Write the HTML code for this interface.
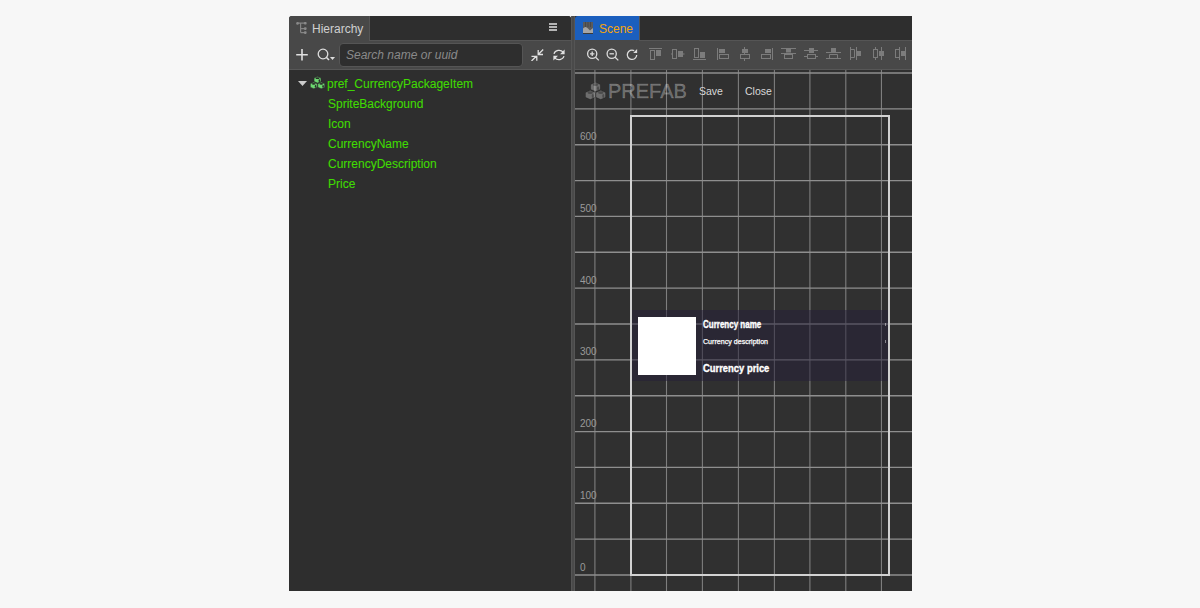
<!DOCTYPE html>
<html><head><meta charset="utf-8">
<style>
*{margin:0;padding:0;box-sizing:border-box}
html,body{width:1200px;height:608px;overflow:hidden;background:#f7f7f7;font-family:"Liberation Sans",sans-serif}
.abs{position:absolute}
#hier{left:289px;top:16px;width:282px;height:575px;background:#2e2e2e;border-radius:3px 3px 0 0;overflow:hidden}
#hier .tabbar{left:80px;top:0;width:202px;height:25px;background:#2e2e2e;border-left:1px solid #555;border-bottom:1px solid #555}
#hier .tab{left:0;top:0;width:80px;height:25px;background:#484848}
#hier .tab span{position:absolute;left:23px;top:6px;font-size:12px;color:#d0d0d0}
#hier .tool{left:0;top:25px;width:282px;height:29px;background:#484848;border-bottom:1px solid #575757}
.search{left:50px;top:2px;width:184px;height:24px;background:#2e2e2e;border:1px solid #555;border-radius:4px}
.search span{position:absolute;left:6px;top:4px;font-size:12px;font-style:italic;color:#8a8a8a}
.tree div{position:absolute;font-size:12px;color:#40da02;white-space:nowrap;-webkit-text-stroke:0.1px #40da02}
#split{left:571px;top:16px;width:4px;height:575px;background:#555}
#split i{position:absolute;left:1px;top:0;width:2px;height:575px;background:#4a4a4a}
#scene{left:575px;top:16px;width:337px;height:575px;background:#303030;overflow:hidden}
#scene .tabbar{z-index:2;left:64px;top:0;width:273px;height:25px;background:#2e2e2e;border-left:1px solid #555;border-bottom:1px solid #555}
#scene .tab{left:0;top:0;width:64px;height:24px;background:#1b5fbe;border-radius:3px 0 0 0}
#scene .tab span{position:absolute;left:24px;top:6px;font-size:12px;color:#f5a50a}
#scene .tool{left:0;top:24px;width:337px;height:30px;background:#484848;border-bottom:1px solid #575757}
#scene .canvas{left:0;top:54px;width:337px;height:521px;background:#303030}
#scene .labels div{position:absolute;left:5px;font-size:10px;color:#9a9a9a;line-height:12px}
#scene .card{left:56px;top:294px;width:258px;height:71px;background:rgba(36,30,56,0.5)}
#scene .white{left:63px;top:301px;width:58px;height:58px;background:#fff}
#scene .rect{left:55px;top:99px;width:260px;height:461px;border:2px solid #d2d2d2}
#scene .ctext{color:#fff;white-space:nowrap;line-height:1}
#scene .prefab{left:33px;top:64px;font-size:20px;color:rgba(255,255,255,0.29);line-height:23px;-webkit-text-stroke:0.35px rgba(255,255,255,0.29)}
#scene .btn{top:69px;font-size:10.5px;color:#d8d8d8;line-height:12px}
</style></head><body>
<div id="hier" class="abs">
  <div class="tabbar abs"></div>
  <div class="tab abs">
    <svg class="abs" style="left:7px;top:6px" width="11" height="12" viewBox="0 0 11 12"><g stroke="#858585" stroke-width="1.2" fill="none"><path d="M1 1.2H9M4.6 1.2V10.6M4.6 6.6H9M4.6 10.6H9"/></g><g fill="#8a8a8a"><circle cx="1.5" cy="1.4" r="1.3"/><rect x="8" y="0" width="2.6" height="2.6" rx="0.8"/><rect x="8" y="5.3" width="2.6" height="2.6" rx="0.8"/><rect x="8" y="9.3" width="2.6" height="2.6" rx="0.8"/></g></svg>
    <span>Hierarchy</span>
  </div>
  <svg class="abs" style="left:260px;top:7px" width="8" height="9" viewBox="0 0 8 9"><g fill="#b4b4b4"><rect x="0" y="0" width="8" height="2"/><rect x="0" y="3" width="8" height="2"/><rect x="0" y="6" width="8" height="2"/></g></svg>
  <div class="tool abs">
    <svg class="abs" style="left:7px;top:8px" width="12" height="12" viewBox="0 0 12 12"><path d="M6 0V11.5M0.2 5.8H11.8" stroke="#e0e0e0" stroke-width="1.6"/></svg>
    <svg class="abs" style="left:28px;top:7px" width="20" height="14" viewBox="0 0 20 14"><circle cx="6" cy="6" r="4.8" fill="none" stroke="#ddd" stroke-width="1.3"/><path d="M9.3 9.3L12 12" stroke="#ddd" stroke-width="1.6"/><path d="M13 9H18L15.5 12Z" fill="#ddd"/></svg>
    <div class="search abs"><span>Search name or uuid</span></div>
    <svg class="abs" style="left:242px;top:8px" width="13" height="12" viewBox="0 0 13 12"><g stroke="#e0e0e0" stroke-width="1.3" fill="none"><path d="M12.2 0.5L7.2 5.5M7.2 1V5.5H12"/><path d="M0.5 12L5.5 7M0.5 7.3H5.8V11.8"/></g></svg>
    <svg class="abs" style="left:264px;top:8px" width="12" height="12" viewBox="0 0 12 12"><g stroke="#e0e0e0" stroke-width="1.2" fill="none"><path d="M1 4.8A5.2 4.6 0 0 1 10.2 3.2"/><path d="M11 7.2A5.2 4.6 0 0 1 1.8 8.8"/></g><path d="M11.6 0.6V5.2H7Z" fill="#e0e0e0"/><path d="M0.4 11.4V6.8H5Z" fill="#e0e0e0"/></svg>
  </div>
  <div class="tree">
    <svg class="abs" style="left:9px;top:65px" width="9" height="5" viewBox="0 0 9 5"><path d="M0 0H9L4.5 5Z" fill="#ccc"/></svg>
    <svg class="abs" style="left:21px;top:60px" width="15" height="13" viewBox="0 0 20 16.6"><path d="M5.4 2.4Q5.4 1.6 6.4 1.2L9 0.3Q10 0 11 0.3L13.6 1.2Q14.6 1.6 14.6 2.4" fill="none"/><path d="M5.4 2.4L10 0.3L14.6 2.4V7L10 9L5.4 7Z" fill="#6cd870" stroke="#2a2a2a" stroke-width="0.7" stroke-linejoin="round"/><ellipse cx="10" cy="2.5" rx="2.6" ry="1.25" fill="#2a2a2a"/><ellipse cx="12.4" cy="5.8" rx="1" ry="1.9" fill="#2a2a2a"/><path d="M0.4 10.0Q0.4 9.2 1.4 8.799999999999999L4 7.8999999999999995Q5 7.6 6 7.8999999999999995L8.6 8.799999999999999Q9.6 9.2 9.6 10.0" fill="none"/><path d="M0.4 10.0L5 7.8999999999999995L9.6 10.0V14.6L5 16.6L0.4 14.6Z" fill="#6cd870" stroke="#2a2a2a" stroke-width="0.7" stroke-linejoin="round"/><ellipse cx="5" cy="10.1" rx="2.6" ry="1.25" fill="#2a2a2a"/><ellipse cx="7.4" cy="13.399999999999999" rx="1" ry="1.9" fill="#2a2a2a"/><path d="M10.4 10.0Q10.4 9.2 11.4 8.799999999999999L14 7.8999999999999995Q15 7.6 16 7.8999999999999995L18.6 8.799999999999999Q19.6 9.2 19.6 10.0" fill="none"/><path d="M10.4 10.0L15 7.8999999999999995L19.6 10.0V14.6L15 16.6L10.4 14.6Z" fill="#6cd870" stroke="#2a2a2a" stroke-width="0.7" stroke-linejoin="round"/><ellipse cx="15" cy="10.1" rx="2.6" ry="1.25" fill="#2a2a2a"/><ellipse cx="17.4" cy="13.399999999999999" rx="1" ry="1.9" fill="#2a2a2a"/></svg>
    <div style="left:38px;top:61px">pref_CurrencyPackageItem</div>
    <div style="left:39px;top:81px">SpriteBackground</div>
    <div style="left:39px;top:101px">Icon</div>
    <div style="left:39px;top:121px">CurrencyName</div>
    <div style="left:39px;top:141px">CurrencyDescription</div>
    <div style="left:39px;top:161px">Price</div>
  </div>
</div>
<div id="split" class="abs"><i></i></div>
<div id="scene" class="abs">
  <div class="tabbar abs"></div>
  <div class="tab abs">
    <svg class="abs" style="left:8px;top:6px" width="10" height="12" viewBox="0 0 10 12"><rect x="0" y="0" width="10" height="11" fill="#5a5a5a"/><path d="M2.5 0V5M5 0V5M7.5 0V5" stroke="#444" stroke-width="0.8"/><path d="M0 11V6.5Q2.5 3.5 5 6.5L7 8.5L10 6V11Z" fill="#a5a5a5"/><rect x="0" y="11" width="10" height="1" fill="#3a3a3a"/></svg>
    <span>Scene</span>
  </div>

  <div class="tool abs"></div>
  <svg class="abs" style="left:0;top:24px" width="337" height="30" viewBox="575 40 337 30">
<g fill="none" stroke="#dcdcdc" stroke-width="1.3">
<circle cx="592.2" cy="53.8" r="4.6"/><path d="M595.6 57.2L598.8 60.4"/><path d="M590 53.8H594.4M592.2 51.6V56"/>
<circle cx="611.7" cy="53.8" r="4.6"/><path d="M615.1 57.2L618.3 60.4"/><path d="M609.5 53.8H613.9"/>
<path d="M636.7 55A4.7 4.7 0 1 1 634.2 50.6"/>
</g>
<path d="M637.1 49.1V52.9H633.2Z" fill="#dcdcdc"/>
<g fill="none" stroke="#7c7c7c" stroke-width="1">
<path d="M649 48.5H662"/><rect x="650.5" y="50.5" width="4" height="9"/>
<rect x="672.5" y="49.5" width="4" height="9"/><path d="M671 54H672M683 54H684.5"/>
<rect x="694.5" y="48.5" width="4" height="9"/><path d="M693 59.5H706"/>
<path d="M717.5 48V60"/><rect x="719.5" y="54.5" width="9" height="4"/>
<path d="M744.5 47V49M744.5 52.5V54.5M744.5 59V61"/><rect x="740.5" y="54.5" width="9" height="4"/>
<path d="M772.5 48V60"/><rect x="761.5" y="54.5" width="9" height="4"/>
<path d="M781 48.5H796M781 53.5H796"/><rect x="784.5" y="54.5" width="8" height="4"/>
<path d="M804 50.5H818M804 56.5H808M816 56.5H818"/><rect x="807.5" y="54.5" width="8" height="4"/>
<path d="M826 52.5H841M826 58.5H841"/><path d="M829.5 58.5V54.5H837.5V58.5"/>
<path d="M850.5 47V60M856.5 47V60"/><path d="M850.5 49.5H854.5V57.5H850.5"/>
<rect x="873.5" y="49.5" width="4" height="8"/><path d="M875.5 47V49.5M875.5 57.5V60M881.5 47V60"/>
<rect x="895.5" y="49.5" width="4" height="8"/><path d="M899.5 47V60M905.5 47V60"/>
</g>
<g fill="#7c7c7c">
<rect x="656" y="50" width="5" height="6"/>
<rect x="678" y="51" width="5" height="6"/>
<rect x="700" y="52" width="5" height="6"/>
<rect x="719" y="49" width="6" height="4"/>
<rect x="742" y="49" width="6" height="4"/>
<rect x="765" y="49" width="6" height="4"/>
<rect x="786" y="48.5" width="5" height="4"/>
<rect x="809" y="48" width="5" height="5"/>
<rect x="831" y="48" width="5" height="4.5"/>
<rect x="857" y="51" width="4" height="5"/>
<rect x="879" y="51" width="5" height="5"/>
<rect x="901" y="51" width="4.5" height="5"/>
</g>
</svg>
  <div class="canvas abs"></div>
  <svg class="abs" style="left:0;top:0" width="337" height="575" viewBox="0 0 337 575">
    <g stroke="#7e7e7e" stroke-width="1.1">
<line x1="19.90" y1="54" x2="19.90" y2="575" />
<line x1="55.90" y1="54" x2="55.90" y2="575" />
<line x1="91.50" y1="54" x2="91.50" y2="575" />
<line x1="127.40" y1="54" x2="127.40" y2="575" />
<line x1="163.40" y1="54" x2="163.40" y2="575" />
<line x1="199.40" y1="54" x2="199.40" y2="575" />
<line x1="234.90" y1="54" x2="234.90" y2="575" />
<line x1="270.80" y1="54" x2="270.80" y2="575" />
<line x1="306.45" y1="54" x2="306.45" y2="575" />
</g><g stroke="#8e8e8e" stroke-width="1.35">
<line x1="0" y1="559.00" x2="337" y2="559.00" />
<line x1="0" y1="523.14" x2="337" y2="523.14" />
<line x1="0" y1="487.29" x2="337" y2="487.29" />
<line x1="0" y1="451.43" x2="337" y2="451.43" />
<line x1="0" y1="415.57" x2="337" y2="415.57" />
<line x1="0" y1="379.72" x2="337" y2="379.72" />
<line x1="0" y1="343.86" x2="337" y2="343.86" />
<line x1="0" y1="308.00" x2="337" y2="308.00" />
<line x1="0" y1="272.14" x2="337" y2="272.14" />
<line x1="0" y1="236.29" x2="337" y2="236.29" />
<line x1="0" y1="200.43" x2="337" y2="200.43" />
<line x1="0" y1="164.57" x2="337" y2="164.57" />
<line x1="0" y1="128.72" x2="337" y2="128.72" />
<line x1="0" y1="92.86" x2="337" y2="92.86" />
<line x1="0" y1="57.00" x2="337" y2="57.00" />
</g>
  </svg>

  <div class="card abs"></div>
  <div class="white abs"></div>
  <div class="abs" style="left:310px;top:307px;width:1px;height:3px;background:rgba(255,255,255,0.45)"></div>
  <div class="abs" style="left:310px;top:324px;width:1px;height:3px;background:rgba(255,255,255,0.45)"></div>
  <div class="rect abs"></div>
  <div class="ctext abs" style="left:128px;top:304px;font-size:10px;font-weight:bold;transform:scaleX(0.8);transform-origin:0 0;-webkit-text-stroke:0.35px #fff">Currency name</div>
  <div class="ctext abs" style="left:128px;top:323px;font-size:7.1px;-webkit-text-stroke:0.25px #fff">Currency description</div>
  <div class="ctext abs" style="left:128px;top:348px;font-size:10px;font-weight:bold;transform:scaleX(0.94);transform-origin:0 0;-webkit-text-stroke:0.35px #fff">Currency price</div>
  <svg class="abs" style="left:9.5px;top:66px" width="21" height="17.5" viewBox="0 0 20 16.6"><path d="M5.4 2.4Q5.4 1.6 6.4 1.2L9 0.3Q10 0 11 0.3L13.6 1.2Q14.6 1.6 14.6 2.4" fill="none"/><path d="M5.4 2.4L10 0.3L14.6 2.4V7L10 9L5.4 7Z" fill="rgba(255,255,255,0.3)" stroke="rgba(0,0,0,0.3)" stroke-width="0.7" stroke-linejoin="round"/><ellipse cx="10" cy="2.5" rx="2.6" ry="1.25" fill="rgba(0,0,0,0.3)"/><ellipse cx="12.4" cy="5.8" rx="1" ry="1.9" fill="rgba(0,0,0,0.3)"/><path d="M0.4 10.0Q0.4 9.2 1.4 8.799999999999999L4 7.8999999999999995Q5 7.6 6 7.8999999999999995L8.6 8.799999999999999Q9.6 9.2 9.6 10.0" fill="none"/><path d="M0.4 10.0L5 7.8999999999999995L9.6 10.0V14.6L5 16.6L0.4 14.6Z" fill="rgba(255,255,255,0.3)" stroke="rgba(0,0,0,0.3)" stroke-width="0.7" stroke-linejoin="round"/><ellipse cx="5" cy="10.1" rx="2.6" ry="1.25" fill="rgba(0,0,0,0.3)"/><ellipse cx="7.4" cy="13.399999999999999" rx="1" ry="1.9" fill="rgba(0,0,0,0.3)"/><path d="M10.4 10.0Q10.4 9.2 11.4 8.799999999999999L14 7.8999999999999995Q15 7.6 16 7.8999999999999995L18.6 8.799999999999999Q19.6 9.2 19.6 10.0" fill="none"/><path d="M10.4 10.0L15 7.8999999999999995L19.6 10.0V14.6L15 16.6L10.4 14.6Z" fill="rgba(255,255,255,0.3)" stroke="rgba(0,0,0,0.3)" stroke-width="0.7" stroke-linejoin="round"/><ellipse cx="15" cy="10.1" rx="2.6" ry="1.25" fill="rgba(0,0,0,0.3)"/><ellipse cx="17.4" cy="13.399999999999999" rx="1" ry="1.9" fill="rgba(0,0,0,0.3)"/></svg>
  <div class="prefab abs">PREFAB</div>
  <div class="btn abs" style="left:124px">Save</div>
  <div class="btn abs" style="left:170px">Close</div>
  <div class="labels">
<div style="top:546.0px">0</div>
<div style="top:474.3px">100</div>
<div style="top:401.6px">200</div>
<div style="top:329.9px">300</div>
<div style="top:259.1px">400</div>
<div style="top:187.4px">500</div>
<div style="top:114.7px">600</div>
  </div>
</div>
</body></html>
